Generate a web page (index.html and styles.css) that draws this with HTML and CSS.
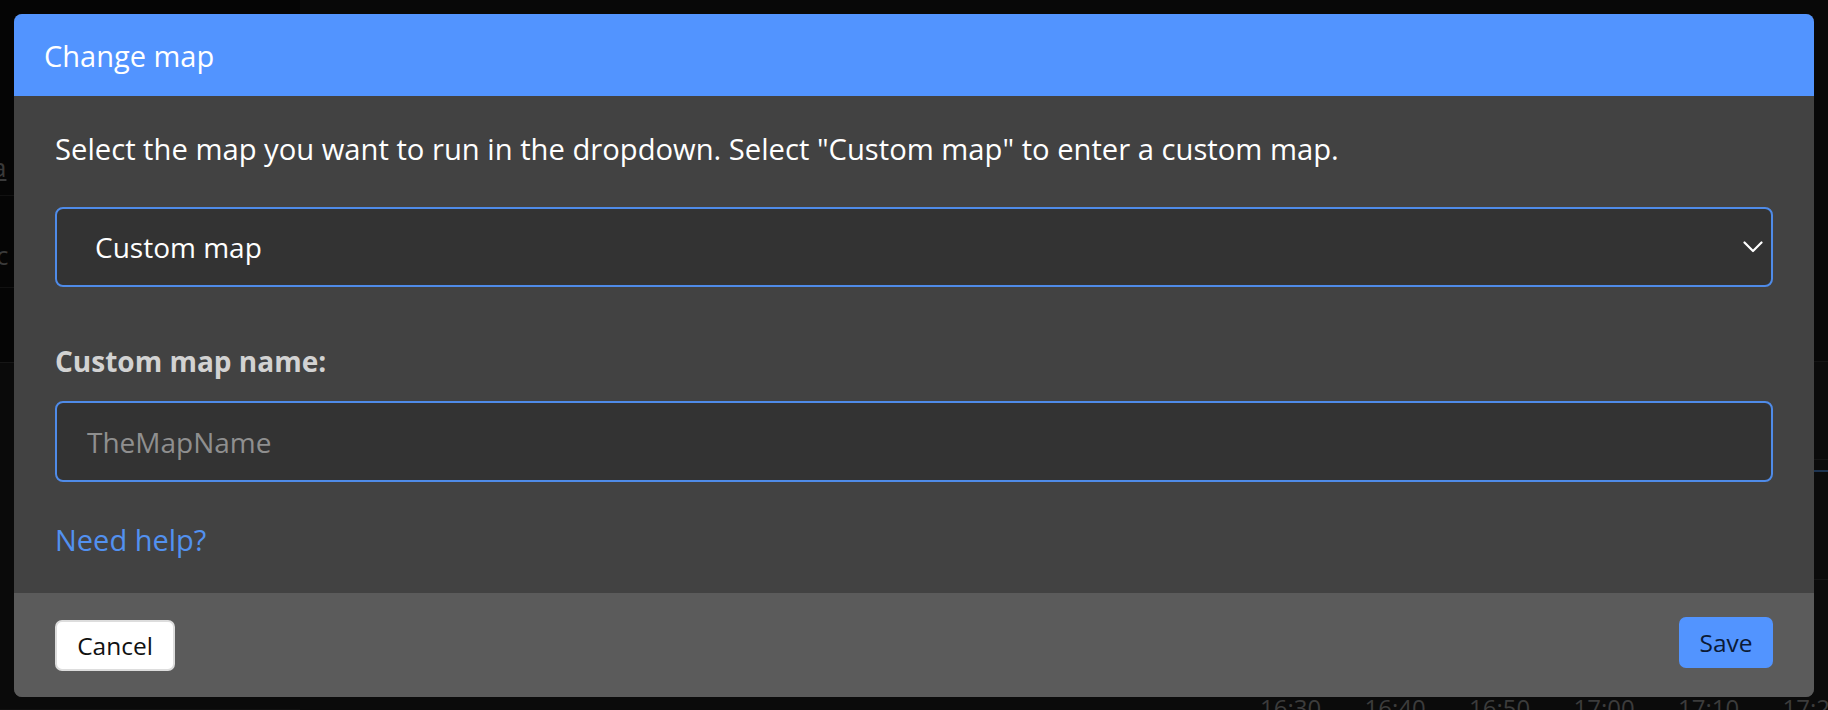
FILE: index.html
```html
<!DOCTYPE html>
<html lang="en">
<head>
<meta charset="utf-8">
<title>Change map</title>
<link rel="stylesheet" href="styles.css">
</head>
<body>
<div class="page">
  <div class="bg-side">
    <div class="bg-cell bg-cell-a"><span class="bg-link">a</span></div>
    <div class="bg-cell bg-cell-c"><span>c</span></div>
    <div class="bg-cell bg-cell-low"></div>
  </div>
  <div class="bg-main">
    <div class="bg-row bg-row-top"></div>
    <div class="bg-row"></div>
    <div class="bg-row bg-row-chart"></div>
    <div class="bg-axis">
      <span>16:30</span><span>16:40</span><span>16:50</span><span>17:00</span><span>17:10</span><span>17:20</span>
    </div>
  </div>
</div>

<div class="modal">
  <div class="modal-header">Change map</div>
  <div class="modal-body">
    <p class="intro">Select the map you want to run in the dropdown. Select "Custom map" to enter a custom map.</p>
    <div class="select">
      <span class="select-value">Custom map</span>
      <svg class="chevron" width="20" height="12" viewBox="0 0 20 12" aria-hidden="true">
        <path d="M1.5 1.5 L10 10 L18.5 1.5" fill="none" stroke="#ffffff" stroke-width="2.2" stroke-linecap="round" stroke-linejoin="round"/>
      </svg>
    </div>
    <label class="field-label">Custom map name:</label>
    <div class="input"><span class="placeholder">TheMapName</span></div>
    <a class="help-link">Need help?</a>
  </div>
  <div class="modal-footer">
    <button class="btn btn-cancel">Cancel</button>
    <button class="btn btn-save">Save</button>
  </div>
</div>
</body>
</html>
```

FILE: styles.css
```css
* { box-sizing: border-box; }
html, body {
  margin: 0;
  padding: 0;
  width: 1828px;
  height: 710px;
  overflow: hidden;
  background: #0a0a0a;
  font-family: "Open Sans", "Noto Sans", sans-serif;
}

/* background page (dimmed behind modal) */
.page {
  display: flex;
  width: 1828px;
  height: 710px;
}
.bg-side {
  flex: none;
  width: 300px;
  display: flex;
  flex-direction: column;
  background: #050505;
}
.bg-cell {
  color: #3a3a3a;
  font-size: 26px;
  border-bottom: 1px solid #111;
}
.bg-cell-a { height: 196px; display: flex; align-items: flex-end; padding-bottom: 10px; }
.bg-link { text-decoration: underline; margin-left: -8px; }
.bg-cell-c { height: 92px; display: flex; align-items: flex-end; padding-bottom: 14px; }
.bg-cell-c span { margin-left: -4px; }
.bg-cell-low { flex: 1; background: #0a0a0a; border-top: 1px solid #161616; margin-top: 74px; }
.bg-main {
  flex: 1;
  min-width: 0;
  display: flex;
  flex-direction: column;
  background: #0b0b0b;
}
.bg-row { flex: none; height: 98px; border-bottom: 1px solid #151515; }
.bg-row-top { height: 362px; background: #080808; border-bottom: 1px solid #141414; }
.bg-row-chart { height: 110px; border-top: 2px solid #1d3350; border-bottom: 1px solid #151515; margin-top: 10px; }
.bg-axis {
  flex: 1;
  display: flex;
  align-items: flex-end;
  overflow: hidden;
  padding-left: 960px;
  color: #3c3c3c;
  font-size: 24px;
  line-height: 1;
}
.bg-axis span { flex: none; width: 104.5px; margin-bottom: -10px; }

/* modal */
.modal {
  position: absolute;
  left: 14px;
  top: 14px;
  width: 1800px;
  height: 683px;
  display: flex;
  flex-direction: column;
  border-radius: 8px;
  overflow: hidden;
  background: #424242;
}
.modal-header {
  height: 82px;
  flex: none;
  background: #5294ff;
  color: #ffffff;
  font-size: 29px;
  display: flex;
  align-items: center;
  padding-left: 30px;
}
.modal-body {
  flex: 1;
  display: flex;
  flex-direction: column;
  align-items: flex-start;
  padding: 33px 41px 0 41px;
  background: #424242;
}
.intro {
  margin: 0;
  color: #ffffff;
  font-size: 29.2px;
  line-height: 40.5px;
}
.select {
  margin-top: 37px;
  width: 100%;
  height: 80px;
  border: 2px solid #4f8be8;
  border-radius: 8px;
  background: #333333;
  display: flex;
  align-items: center;
  justify-content: space-between;
  padding: 0 8px 0 38px;
}
.select-value {
  color: #ffffff;
  font-size: 28px;
}
.chevron { display: block; }
.field-label {
  margin-top: 54px;
  color: #d2d2d2;
  font-weight: 700;
  font-size: 28px;
  line-height: 40.5px;
}
.input {
  margin-top: 20px;
  width: 100%;
  height: 81px;
  border: 2px solid #4f8be8;
  border-radius: 8px;
  background: #333333;
  display: flex;
  align-items: center;
  padding-left: 30px;
}
.placeholder {
  color: #8f8f8f;
  font-size: 28px;
}
.help-link {
  margin-top: 38px;
  color: #5291f0;
  font-size: 29px;
  line-height: 40.5px;
  cursor: pointer;
}
.modal-footer {
  height: 104px;
  flex: none;
  background: #5b5b5b;
  display: flex;
  justify-content: space-between;
  align-items: flex-start;
  padding: 24px 41px 0 41px;
}
.btn {
  font-family: "Open Sans", "Noto Sans", sans-serif;
  font-size: 24.5px;
  height: 51px;
  border-radius: 7px;
  cursor: pointer;
  padding: 0;
}
.btn-cancel {
  margin-top: 3px;
  width: 120px;
  background: #ffffff;
  color: #111111;
  border: 2px solid #dddddd;
}
.btn-save {
  width: 94px;
  background: #5294ff;
  color: #0b1a36;
  border: none;
}
```
